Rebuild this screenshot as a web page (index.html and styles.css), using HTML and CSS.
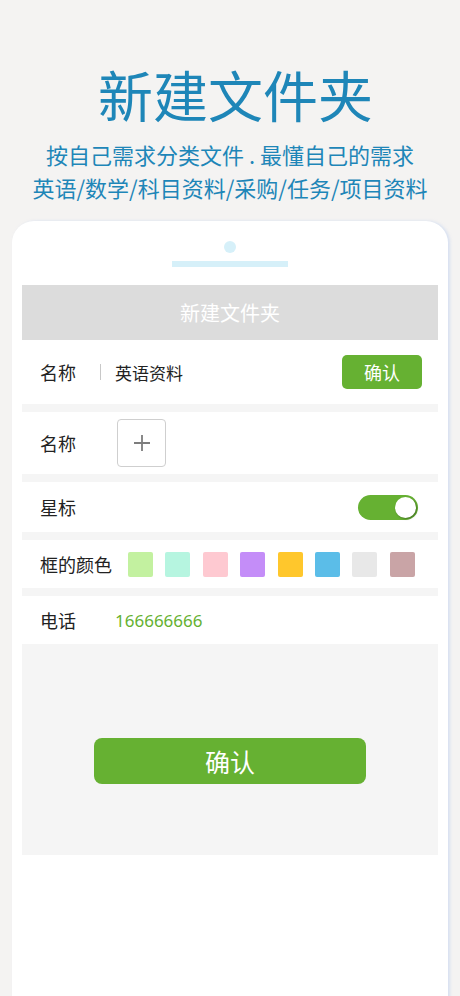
FILE: index.html
```html
<!DOCTYPE html>
<html lang="zh-CN">

<head>
    <meta charset="UTF-8">
    <meta name="viewport" content="width=device-width, initial-scale=1.0">
    <title>新建文件夹</title>
    <link rel="stylesheet" href="styles.css">
</head>

<body>
    <div class="intro">
        <h1>新建文件夹</h1>
        <p>按自己需求分类文件 . 最懂自己的需求</p>
        <p>英语/数学/科目资料/采购/任务/项目资料</p>
    </div>

    <div class="phone">
        <div class="notch">
            <span class="cam"></span>
            <span class="speaker"></span>
        </div>

        <div class="bar-title">新建文件夹</div>

        <div class="row row-name">
            <span class="label">名称</span>
            <span class="divider"></span>
            <span class="value">英语资料</span>
            <button class="btn-small">确认</button>
        </div>

        <div class="row row-icon">
            <span class="label">名称</span>
            <div class="add-box">
                <svg width="18" height="18" viewBox="0 0 18 18">
                    <path d="M9 1v16M1 9h16" stroke="#7d7d7d" stroke-width="1.8" fill="none" />
                </svg>
            </div>
        </div>

        <div class="row row-star">
            <span class="label">星标</span>
            <div class="switch"><span class="knob"></span></div>
        </div>

        <div class="row row-color">
            <span class="label">框的颜色</span>
            <div class="swatches">
                <span class="sw c1"></span>
                <span class="sw c2"></span>
                <span class="sw c3"></span>
                <span class="sw c4"></span>
                <span class="sw c5"></span>
                <span class="sw c6"></span>
                <span class="sw c7"></span>
                <span class="sw c8"></span>
            </div>
        </div>

        <div class="row row-phone">
            <span class="label">电话</span>
            <span class="tel">166666666</span>
        </div>

        <div class="footer">
            <button class="btn-big">确认</button>
        </div>
    </div>
</body>

</html>
```

FILE: styles.css
```css
body {
    margin: 0;
    background: #f4f3f2;
    font-family: "Noto Sans CJK SC", "Noto Sans", sans-serif;
    color: #222;
}

.intro {
    text-align: center;
    padding-top: 58px;
    color: #1e86b8;
}

.intro h1 {
    margin: 0 0 10px;
    padding-left: 11px;
    font-size: 55px;
    line-height: 70px;
    font-weight: 400;
}

.intro p {
    margin: 0;
    font-size: 22px;
    line-height: 33px;
}

.phone {
    margin: 17px 12px 0;
    padding: 20px 10px 0;
    background: #fff;
    border-radius: 22px 22px 0 0;
    box-shadow: 2px 0 3px rgba(196, 212, 240, 0.6);
    min-height: 800px;
}

.notch {
    display: flex;
    flex-direction: column;
    align-items: center;
    gap: 8px;
    margin-bottom: 18px;
}

.cam {
    width: 12px;
    height: 12px;
    border-radius: 50%;
    background: #d6f0f9;
}

.speaker {
    width: 116px;
    height: 6px;
    background: #d6f0f9;
}

.bar-title {
    height: 55px;
    line-height: 55px;
    background: #dcdcdc;
    color: #fff;
    text-align: center;
    font-size: 20px;
}

.row {
    display: flex;
    align-items: center;
    padding-left: 18px;
    border-bottom: 8px solid #f5f5f5;
    background: #fff;
}

.label {
    font-size: 18px;
    width: 75px;
    flex-shrink: 0;
}

.row-name {
    height: 64px;
}

.row-name .label {
    width: 60px;
}

.divider {
    width: 1px;
    height: 16px;
    background: #c8c8c8;
    margin-right: 14px;
}

.value {
    font-size: 17px;
    flex: 1;
}

.btn-small {
    width: 80px;
    height: 34px;
    margin-right: 16px;
    border: 0;
    border-radius: 5px;
    background: #66b132;
    color: #fff;
    font-family: inherit;
    font-size: 18px;
}

.row-icon {
    height: 62px;
}

.add-box {
    width: 47px;
    height: 46px;
    margin-left: 2px;
    border: 1px solid #cfcfcf;
    border-radius: 4px;
    display: flex;
    align-items: center;
    justify-content: center;
}

.row-star {
    height: 50px;
    justify-content: space-between;
}

.switch {
    width: 60px;
    height: 25px;
    margin-right: 20px;
    border-radius: 13px;
    background: #66b132;
    display: flex;
    justify-content: flex-end;
    align-items: center;
    padding-right: 2px;
    box-sizing: border-box;
}

.knob {
    width: 21px;
    height: 21px;
    border-radius: 50%;
    background: #fff;
    box-shadow: 1px 1px 2px rgba(0, 0, 0, 0.35);
}

.row-color {
    height: 48px;
}

.row-color .label {
    width: auto;
    margin-right: 16px;
}

.swatches {
    display: flex;
    gap: 12.4px;
}

.sw {
    width: 25px;
    height: 25px;
    border-radius: 2px;
}

.c1 { background: #c3f1a0; }
.c2 { background: #b6f5e0; }
.c3 { background: #fec9d1; }
.c4 { background: #c48df8; }
.c5 { background: #ffc72c; }
.c6 { background: #5bbde8; }
.c7 { background: #e8e8e8; }
.c8 { background: #c9a4a6; }

.row-phone {
    height: 48px;
    border-bottom: 0;
}

.tel {
    font-family: "Noto Sans", sans-serif;
    font-size: 17px;
    color: #66b132;
}

.footer {
    height: 211px;
    background: #f5f5f5;
    padding-top: 94px;
    box-sizing: border-box;
    display: flex;
    justify-content: center;
    align-items: flex-start;
}

.btn-big {
    width: 272px;
    height: 46px;
    border: 0;
    border-radius: 8px;
    background: #66b132;
    color: #fff;
    font-family: inherit;
    font-size: 25px;
}
```
